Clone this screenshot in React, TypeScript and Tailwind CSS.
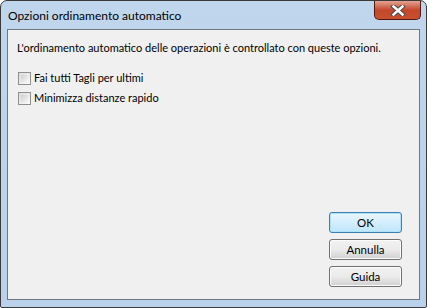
import React from 'react';

const font = { fontFamily: 'Lato, "Liberation Sans", Arial, sans-serif' };

const Check: React.FC<{ label: string }> = ({ label }) => (
  <label className="flex items-center gap-[3px] h-[20px]">
    <span className="w-[13px] h-[13px] border border-[#8e8f8f] bg-gradient-to-br from-[#dcdcdc] to-[#fbfbfb] p-[2px]">
      <span className="block w-full h-full bg-gradient-to-br from-[#cfcfcf] to-[#f6f6f6]" />
    </span>
    <span>{label}</span>
  </label>
);

const Btn: React.FC<{ label: string; def?: boolean }> = ({ label, def }) => (
  <button
    className={`w-[73px] h-[21px] rounded-[3px] border text-[11.5px] leading-none ${
      def
        ? 'border-[#3c7fb1] bg-gradient-to-b from-[#eaf6fd] to-[#bee6fd] shadow-[inset_0_0_0_1px_#b1e0fb]'
        : 'border-[#707070] bg-gradient-to-b from-[#f2f2f2] via-[#ebebeb] to-[#d0d0d0] shadow-[inset_0_0_0_1px_#fcfcfc]'
    }`}
  >
    {label}
  </button>
);

export default function App() {
  return (
    <div className="w-[427px] h-[308px] bg-white text-[11px] text-black" style={font}>
      <div className="w-full h-full flex flex-col rounded-t-[7px] rounded-b-[2px] border border-[#3a3a3a] bg-gradient-to-b from-[#c0d6ed] to-[#b9d1ea] px-[6px] pb-[7px]">
        {/* title bar */}
        <div className="h-[28px] flex items-start justify-between">
          <span className="pt-[6px] pl-[1px] text-[12px]">Opzioni ordinamento automatico</span>
          <button className="w-[47px] h-[19px] mr-[-1px] rounded-b-[5px] border border-t-0 border-[#4e1a12] bg-gradient-to-b from-[#e3a391] via-[#c4472c] to-[#c8502f] shadow-[inset_0_0_0_1px_#e6968100] flex items-center justify-center">
            <svg width="16" height="11" viewBox="0 0 16 11">
              <path d="M3.5 1.5 L12.5 9.5 M12.5 1.5 L3.5 9.5" stroke="#4b4b4b" strokeWidth="4.5" strokeLinecap="square" />
              <path d="M3.5 1.5 L12.5 9.5 M12.5 1.5 L3.5 9.5" stroke="#ffffff" strokeWidth="2.5" strokeLinecap="square" />
            </svg>
          </button>
        </div>
        {/* client area */}
        <div className="flex-1 flex flex-col border border-[#6e7883] bg-[#f0f0f0] px-[9px]">
          <p className="mt-[10px] whitespace-nowrap">L'ordinamento automatico delle operazioni è controllato con queste opzioni.</p>
          <div className="mt-[12px] flex flex-col pl-[1px]">
            <Check label="Fai tutti Tagli per ultimi" />
            <Check label="Minimizza distanze rapido" />
          </div>
          <div className="mt-auto mb-[12px] self-end mr-[8px] flex flex-col gap-[6px]">
            <Btn label="OK" def />
            <Btn label="Annulla" />
            <Btn label="Guida" />
          </div>
        </div>
      </div>
    </div>
  );
}
